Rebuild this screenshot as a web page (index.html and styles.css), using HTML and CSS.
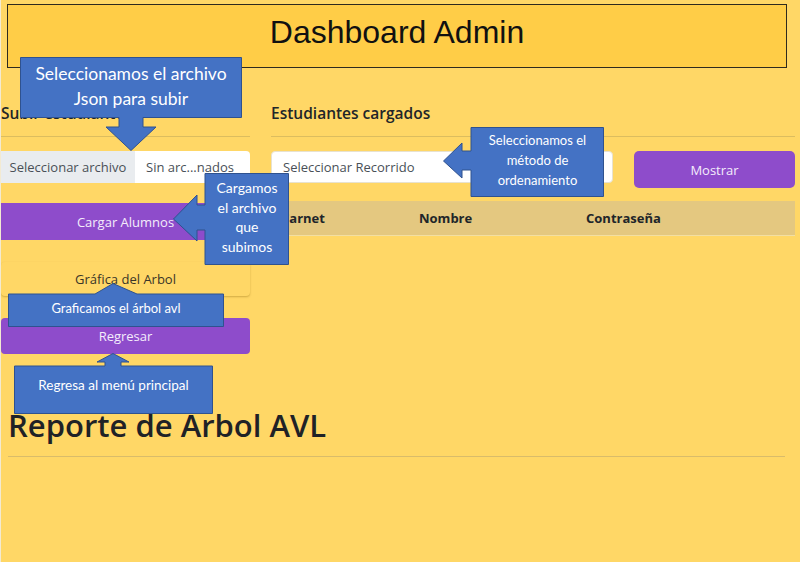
FILE: index.html
```html
<!DOCTYPE html>
<html lang="es">
<head>
<meta charset="utf-8">
<title>Dashboard Admin</title>
<link rel="stylesheet" href="styles.css">
</head>
<body>
<header class="topbar"><h1 class="topbar-title">Dashboard Admin</h1></header>

<main class="panels">
  <section class="col col-left">
    <h5 class="sec-title">Subir estudiantes</h5>
    <hr class="rule">
    <div class="file-input"><span class="file-btn">Seleccionar archivo</span><span class="file-name">Sin arc...nados</span></div>
    <button class="btn btn-purple btn-load">Cargar Alumnos</button>
    <button class="btn btn-light btn-graph">Gráfica del Arbol</button>
    <button class="btn btn-purple btn-back">Regresar</button>
  </section>
  <section class="col col-right">
    <h5 class="sec-title">Estudiantes cargados</h5>
    <hr class="rule">
    <div class="controls">
      <div class="select">Seleccionar Recorrido</div>
      <button class="btn btn-purple btn-show">Mostrar</button>
    </div>
    <div class="table-head"><span class="th th-1">Carnet</span><span class="th th-2">Nombre</span><span class="th th-3">Contraseña</span></div>
  </section>
</main>

<section class="report">
  <h2 class="report-title">Reporte de Arbol AVL</h2>
  <hr class="report-rule">
</section>

<div class="callout c1">
  <svg class="callout-shape" viewBox="0 0 222 94" width="222" height="94"><polygon points="0.5,0.5 221.5,0.5 221.5,60.5 123,60.5 123,70 136,70 111,93.5 86,70 99,70 99,60.5 0.5,60.5"/></svg>
  <div class="callout-text t1">Seleccionamos el archivo<br>Json para subir</div>
</div>

<div class="callout c2">
  <svg class="callout-shape" viewBox="0 0 161 70" width="161" height="70"><polygon points="28,0.5 160.5,0.5 160.5,69.5 28,69.5 28,43 19,43 19,51 0.5,34 19,16 19,24 28,24"/></svg>
  <div class="callout-text t2">Seleccionamos el<br>método de<br>ordenamiento</div>
</div>

<div class="callout c3">
  <svg class="callout-shape" viewBox="0 0 116 92" width="116" height="92"><polygon points="32,0.5 115.5,0.5 115.5,91.5 32,91.5 32,57 24,57 24,68 0.5,46 24,22 24,32 32,32"/></svg>
  <div class="callout-text t3">Cargamos<br>el archivo<br>que<br>subimos</div>
</div>

<div class="callout c4">
  <svg class="callout-shape" viewBox="0 0 216 44" width="216" height="44"><polygon points="0.5,11 87,11 105,0.5 129,11 215.5,11 215.5,43.5 0.5,43.5"/></svg>
  <div class="callout-text t4">Graficamos el árbol avl</div>
</div>

<div class="callout c5">
  <svg class="callout-shape" viewBox="0 0 199 61" width="199" height="61"><polygon points="0.5,13 91,13 91,9 83,9 99,0.5 115,9 107,9 107,13 198.5,13 198.5,60.5 0.5,60.5"/></svg>
  <div class="callout-text t5">Regresa al menú principal</div>
</div>
</body>
</html>
```

FILE: styles.css
```css
* { box-sizing: border-box; }

html, body {
  margin: 0;
  padding: 0;
}

body {
  width: 800px;
  height: 562px;
  overflow: hidden;
  background: #ffd766;
  border-left: 1px solid #f3ead2;
  font-family: "Open Sans", "Noto Sans", sans-serif;
  color: #212529;
}

/* Header */
.topbar {
  margin: 4px 13px 0 6px;
  height: 64px;
  border: 1px solid #2e2a1e;
  background: #ffcd47;
  display: flex;
  justify-content: center;
  padding-top: 9px;
}

.topbar-title {
  margin: 0;
  font-family: "Liberation Sans", Arial, sans-serif;
  font-weight: 400;
  font-size: 32px;
  line-height: 36px;
  color: #111;
}

/* Panels */
.panels {
  display: grid;
  grid-template-columns: 249px 524px;
  column-gap: 21px;
  padding-top: 35px;
}

.col {
  display: flex;
  flex-direction: column;
}

.sec-title {
  margin: 0 0 13px;
  font-size: 15.5px;
  font-weight: 600;
  line-height: 20px;
}

.rule {
  margin: 0 0 14px;
  border: 0;
  border-top: 1px solid #dcbd5f;
  height: 0;
}

.file-input {
  display: flex;
  height: 32px;
  font-size: 13px;
  color: #495057;
}

.file-btn {
  width: 134px;
  background: #e9ecef;
  display: flex;
  align-items: center;
  justify-content: center;
}

.file-name {
  flex: 1;
  background: #fff;
  border-radius: 0 4px 4px 0;
  display: flex;
  align-items: center;
  padding-left: 11px;
}

.btn {
  font-family: "Open Sans", "Noto Sans", sans-serif;
  font-size: 13px;
  border: 0;
  padding: 0;
  width: 100%;
  cursor: pointer;
}

.btn-purple {
  background: #8e4ccb;
  color: #f4ecfb;
  border-radius: 4px;
}

.btn-load {
  margin-top: 20px;
  height: 37px;
  border-radius: 0 4px 4px 0;
}

.btn-light {
  background: #ffd766;
  color: #3a3528;
  border-radius: 4px;
  box-shadow: 0 1px 2px rgba(120, 90, 0, 0.35);
}

.btn-graph {
  margin-top: 22px;
  height: 34px;
}

.btn-back {
  margin-top: 22px;
  height: 36px;
}

/* Right column */
.controls {
  display: flex;
  gap: 21px;
  align-items: flex-start;
}

.select {
  width: 342px;
  height: 32px;
  background: #fff;
  border: 1px solid #e8e2cf;
  border-radius: 4px;
  display: flex;
  align-items: center;
  padding-left: 11px;
  font-size: 13px;
  color: #495057;
}

.btn-show {
  width: 161px;
  height: 37px;
  border-radius: 5px;
}

.table-head {
  margin-top: 13px;
  height: 35px;
  background: #e4c880;
  border-bottom: 1px solid #f2dfa3;
  display: grid;
  grid-template-columns: 138px 167px 1fr;
  align-items: center;
  padding-left: 10px;
  font-size: 13px;
  font-weight: 700;
}

/* Report */
.report {
  margin: 51px 15px 0 7px;
}

.report-title {
  margin: 0;
  font-size: 31px;
  font-weight: 600;
  line-height: 40px;
  color: #1f2226;
}

.report-rule {
  margin: 11px 0 0;
  border: 0;
  border-top: 1px solid #d9bc6a;
  height: 0;
}

/* Callouts */
.callout {
  position: absolute;
}

.callout-shape {
  position: absolute;
  left: 0;
  top: 0;
  display: block;
}

.callout-shape polygon {
  fill: #4472c4;
  stroke: #2f528f;
  stroke-width: 1;
}

.callout-text {
  position: absolute;
  color: #fff;
  font-family: Lato, "Open Sans", sans-serif;
  text-align: center;
  display: flex;
  align-items: center;
  justify-content: center;
}

.c1 { left: 20px; top: 57px; width: 222px; height: 94px; }
.t1 { left: 0; top: 3px; width: 222px; height: 52px; font-size: 17.5px; line-height: 25px; }

.c2 { left: 443px; top: 127px; width: 161px; height: 70px; }
.t2 { left: 28px; top: 3px; width: 133px; height: 60px; font-size: 13px; line-height: 20px; }

.c3 { left: 173px; top: 173px; width: 116px; height: 92px; }
.t3 { left: 32px; top: 5px; width: 84px; height: 78px; font-size: 14px; line-height: 19.5px; }

.c4 { left: 8px; top: 283px; width: 216px; height: 44px; }
.t4 { left: 0; top: 15px; width: 216px; height: 20px; font-size: 13px; line-height: 20px; }

.c5 { left: 14px; top: 353px; width: 199px; height: 61px; }
.t5 { left: 0; top: 22px; width: 199px; height: 20px; font-size: 13.5px; line-height: 20px; }
```
